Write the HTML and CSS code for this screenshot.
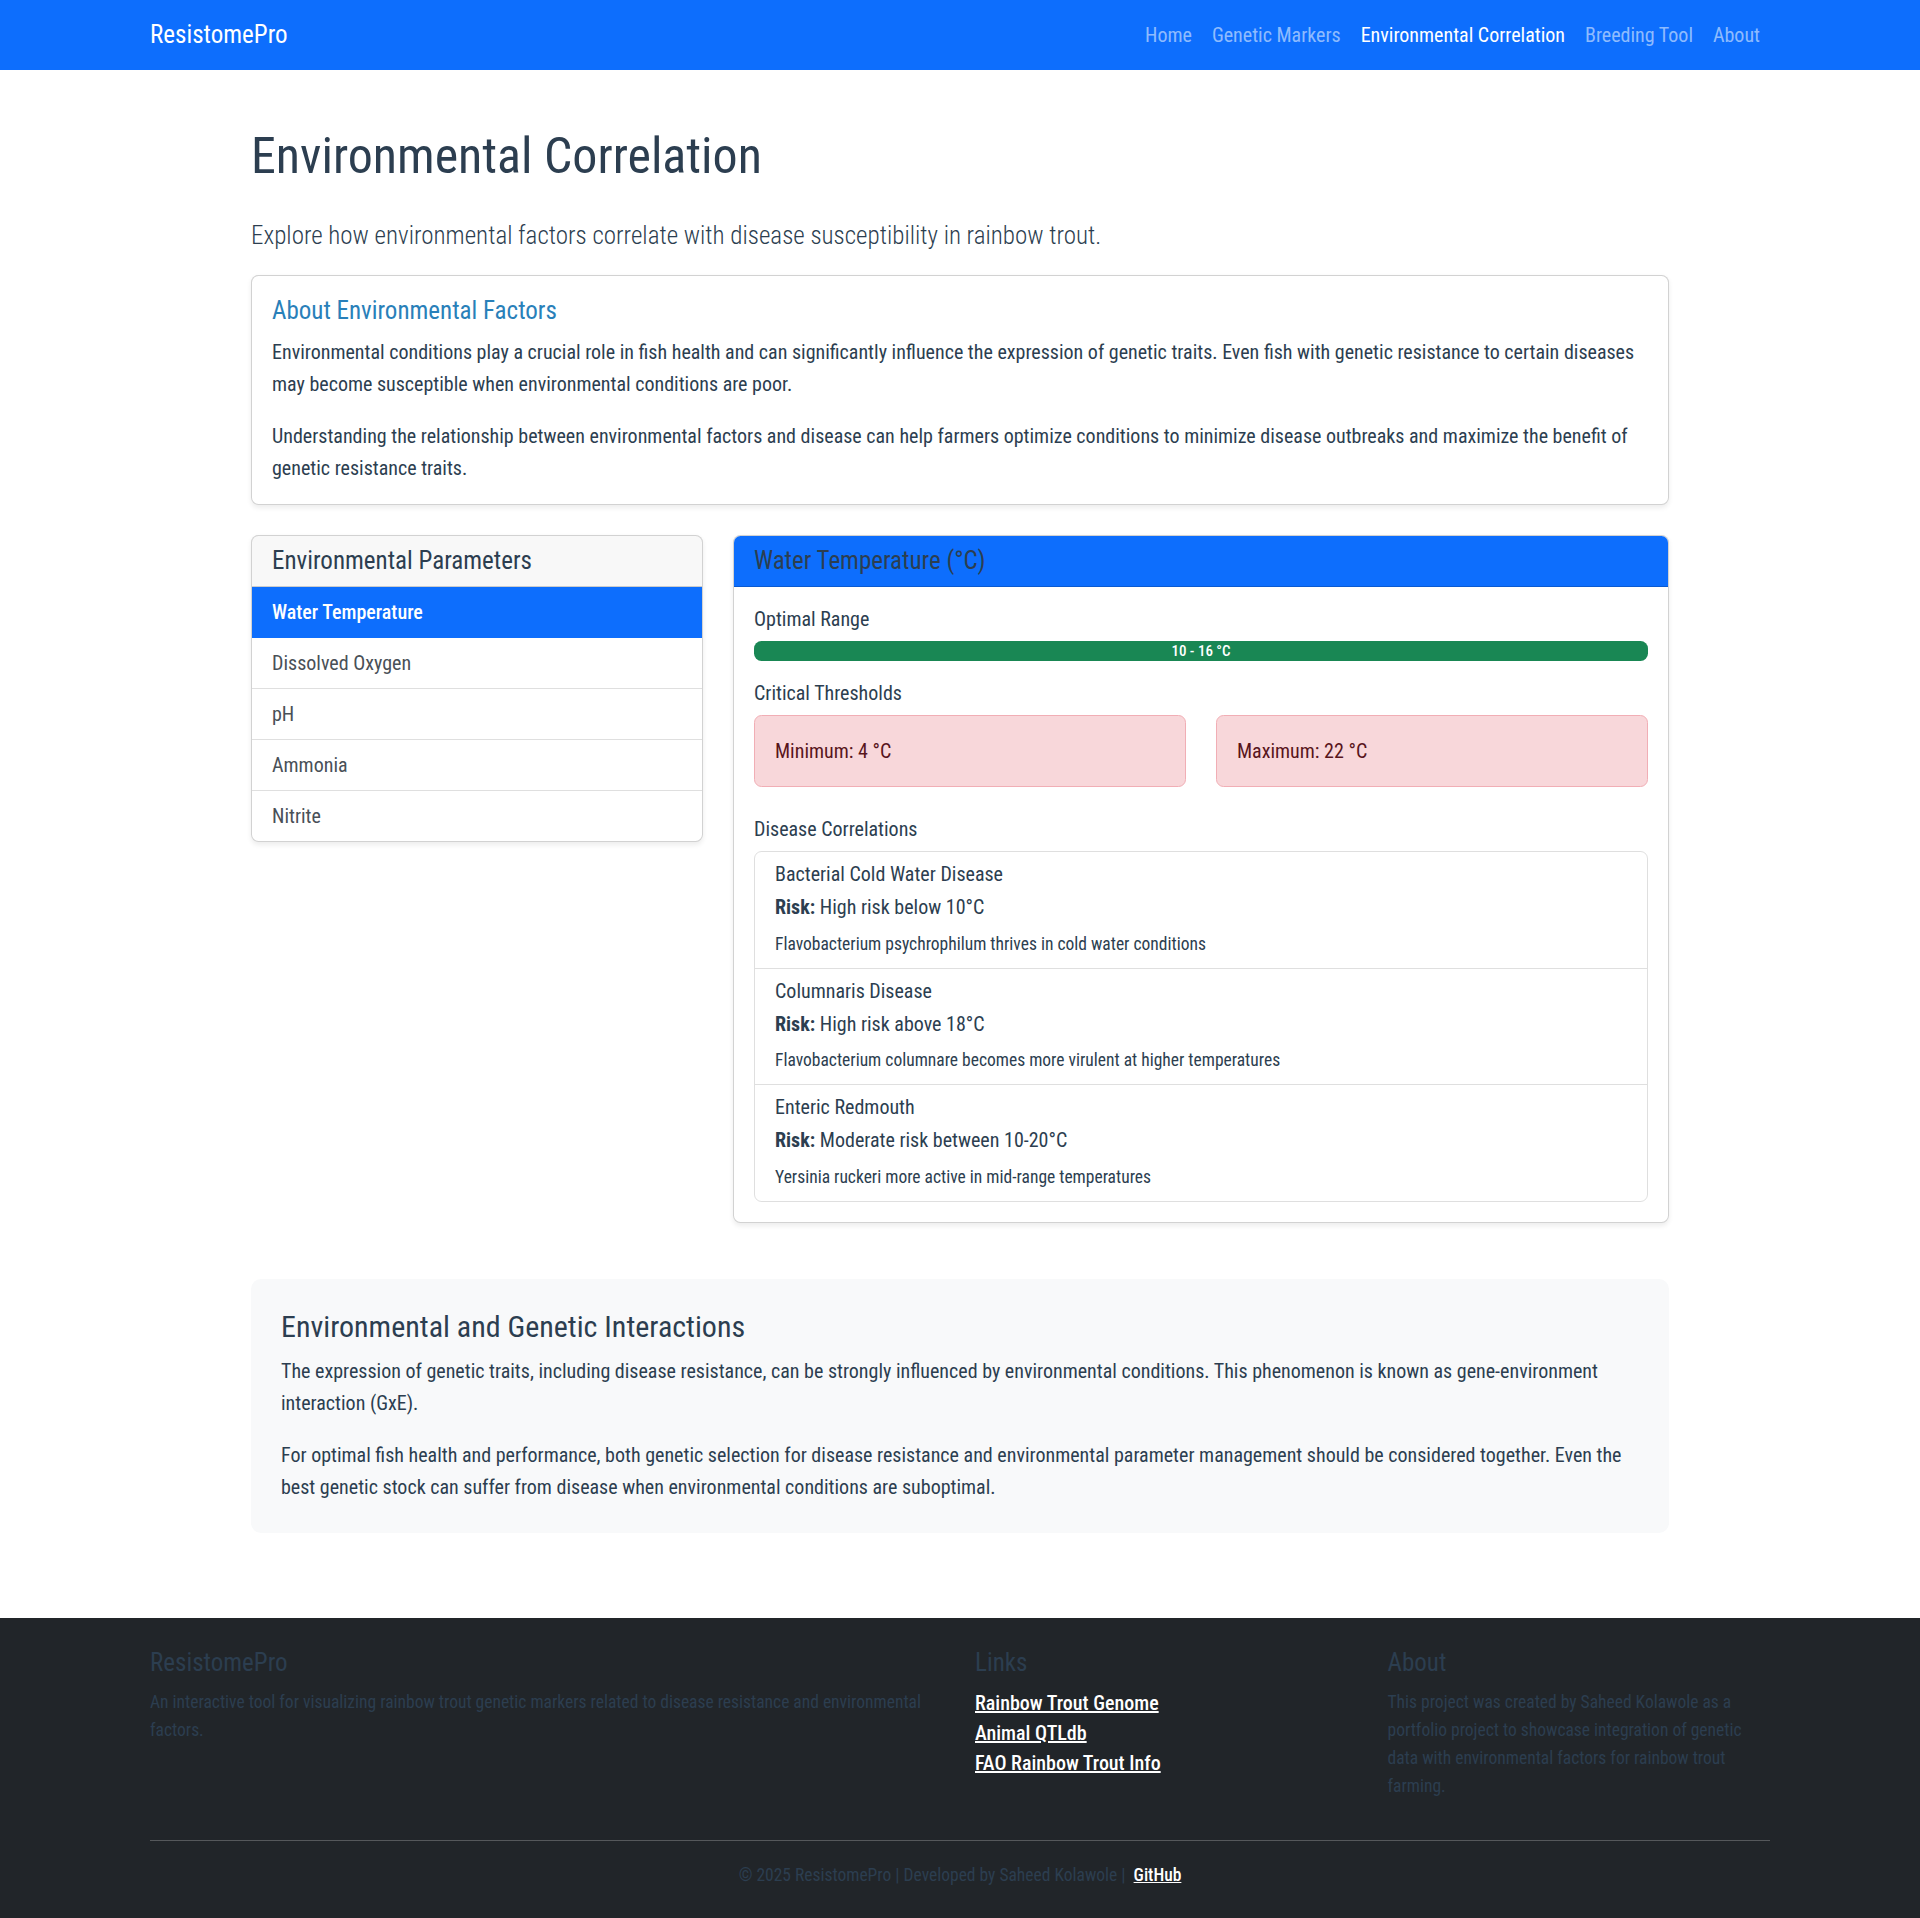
FILE: index.html
```html
<!DOCTYPE html>
<html lang="en">
<head>
<meta charset="utf-8">
<title>Environmental Correlation - ResistomePro</title>
<link rel="stylesheet" href="styles.css">
</head>
<body>
<nav class="navbar">
  <div class="nav-inner">
    <a class="brand" href="#">ResistomePro</a>
    <ul class="nav-links">
      <li><a href="#">Home</a></li>
      <li><a href="#">Genetic Markers</a></li>
      <li><a class="active" href="#">Environmental Correlation</a></li>
      <li><a href="#">Breeding Tool</a></li>
      <li><a href="#">About</a></li>
    </ul>
  </div>
</nav>

<main class="main">
  <h1 class="page-title">Environmental Correlation</h1>
  <p class="lead">Explore how environmental factors correlate with disease susceptibility in rainbow trout.</p>

  <section class="card about-card">
    <div class="card-body">
      <h5 class="about-title">About Environmental Factors</h5>
      <p>Environmental conditions play a crucial role in fish health and can significantly influence the expression of genetic traits. Even fish with genetic resistance to certain diseases may become susceptible when environmental conditions are poor.</p>
      <p class="last">Understanding the relationship between environmental factors and disease can help farmers optimize conditions to minimize disease outbreaks and maximize the benefit of genetic resistance traits.</p>
    </div>
  </section>

  <div class="param-row">
    <div class="card param-card">
      <div class="card-header"><h5>Environmental Parameters</h5></div>
      <ul class="param-list">
        <li class="active">Water Temperature</li>
        <li>Dissolved Oxygen</li>
        <li>pH</li>
        <li>Ammonia</li>
        <li>Nitrite</li>
      </ul>
    </div>

    <div class="card detail-card">
      <div class="card-header primary"><h5>Water Temperature (°C)</h5></div>
      <div class="card-body">
        <h6>Optimal Range</h6>
        <div class="progress"><div class="progress-bar" style="width: 100%">10 - 16 °C</div></div>

        <h6>Critical Thresholds</h6>
        <div class="thresholds">
          <div class="alert">Minimum: 4 °C</div>
          <div class="alert">Maximum: 22 °C</div>
        </div>

        <h6>Disease Correlations</h6>
        <ul class="disease-list">
          <li>
            <h6 class="disease-name">Bacterial Cold Water Disease</h6>
            <p class="risk"><strong>Risk:</strong> High risk below 10°C</p>
            <p class="desc">Flavobacterium psychrophilum thrives in cold water conditions</p>
          </li>
          <li>
            <h6 class="disease-name">Columnaris Disease</h6>
            <p class="risk"><strong>Risk:</strong> High risk above 18°C</p>
            <p class="desc">Flavobacterium columnare becomes more virulent at higher temperatures</p>
          </li>
          <li>
            <h6 class="disease-name">Enteric Redmouth</h6>
            <p class="risk"><strong>Risk:</strong> Moderate risk between 10-20°C</p>
            <p class="desc">Yersinia ruckeri more active in mid-range temperatures</p>
          </li>
        </ul>
      </div>
    </div>
  </div>

  <section class="gxe">
    <h4>Environmental and Genetic Interactions</h4>
    <p>The expression of genetic traits, including disease resistance, can be strongly influenced by environmental conditions. This phenomenon is known as gene-environment interaction (GxE).</p>
    <p class="last">For optimal fish health and performance, both genetic selection for disease resistance and environmental parameter management should be considered together. Even the best genetic stock can suffer from disease when environmental conditions are suboptimal.</p>
  </section>
</main>

<footer class="footer">
  <div class="footer-inner">
    <div class="footer-row">
      <div class="footer-col">
        <h5>ResistomePro</h5>
        <p class="small">An interactive tool for visualizing rainbow trout genetic markers related to disease resistance and environmental factors.</p>
      </div>
      <div class="footer-col">
        <h5>Links</h5>
        <ul class="footer-links">
          <li><a href="#">Rainbow Trout Genome</a></li>
          <li><a href="#">Animal QTLdb</a></li>
          <li><a href="#">FAO Rainbow Trout Info</a></li>
        </ul>
      </div>
      <div class="footer-col">
        <h5>About</h5>
        <p class="small">This project was created by Saheed Kolawole as a portfolio project to showcase integration of genetic data with environmental factors for rainbow trout farming.</p>
      </div>
    </div>
    <hr class="footer-rule">
    <p class="copyright">© 2025 ResistomePro | Developed by Saheed Kolawole | &nbsp;<a href="#">GitHub</a></p>
  </div>
</footer>
</body>
</html>
```

FILE: styles.css
```css
html {
  font-size: 20px;
}

body {
  margin: 0;
  font-family: "Roboto Condensed", Roboto, "Liberation Sans", sans-serif;
  font-size: 20px;
  line-height: 1.5;
  color: #2c3e50;
  background: #fff;
}

h1, h4, h5, h6 {
  margin: 0 0 10px;
  font-weight: 400;
  line-height: 1.2;
  color: #2c3e50;
}

h5 { font-size: 25px; }
h6 { font-size: 20px; }

p {
  margin: 0 0 20px;
  line-height: 1.6;
}

p.last { margin-bottom: 0; }

/* Navbar */
.navbar {
  background: #0d6efd;
  padding: 10px 0;
}

.nav-inner {
  width: 1620px;
  margin: 0 auto;
  display: flex;
  align-items: center;
  justify-content: space-between;
}

.brand {
  font-size: 25px;
  line-height: 37.5px;
  padding: 6.25px 0;
  color: #fff;
  text-decoration: none;
}

.nav-links {
  list-style: none;
  margin: 0;
  padding: 0;
  display: flex;
}

.nav-links a {
  display: block;
  padding: 10px;
  line-height: 30px;
  color: rgba(255, 255, 255, 0.55);
  text-decoration: none;
}

.nav-links a.active { color: #fff; }

/* Main */
.main {
  width: 1418px;
  margin: 56px auto 0;
}

.page-title {
  font-size: 50px;
  margin-bottom: 30px;
}

.lead {
  font-size: 25px;
  font-weight: 300;
  line-height: 40px;
  margin-bottom: 19px;
}

.card {
  background: #fff;
  border: 1px solid rgba(0, 0, 0, 0.175);
  border-radius: 7.5px;
  box-shadow: 0 2.5px 5px rgba(0, 0, 0, 0.075);
  overflow: hidden;
}

.card-body { padding: 20px; }

.about-card { margin-bottom: 30px; }

.about-title {
  color: #2980b9;
  margin-bottom: 10px;
}

.param-row {
  display: grid;
  grid-template-columns: 452px 1fr;
  gap: 30px;
  align-items: start;
  margin-bottom: 56px;
}

.card-header {
  padding: 10px 20px;
  background: rgba(33, 37, 41, 0.03);
  border-bottom: 1px solid rgba(0, 0, 0, 0.175);
}

.card-header h5 {
  margin: 0;
  line-height: 30px;
}

.card-header.primary { background: #0d6efd; }

.param-list {
  list-style: none;
  margin: 0;
  padding: 0;
}

.param-list li {
  padding: 10px 20px;
  line-height: 30px;
  color: #495057;
  border-bottom: 1px solid rgba(0, 0, 0, 0.125);
}

.param-list li:last-child { border-bottom: 0; }

.param-list li.active {
  background: #0d6efd;
  color: #fff;
  font-weight: 500;
  border-bottom-color: #0d6efd;
}

.progress {
  display: flex;
  height: 20px;
  background: #e9ecef;
  border-radius: 7.5px;
  overflow: hidden;
  margin-bottom: 20px;
}

.progress-bar {
  display: flex;
  align-items: center;
  justify-content: center;
  background: #198754;
  color: #fff;
  font-size: 15px;
  font-weight: 500;
  white-space: nowrap;
}

.thresholds {
  display: grid;
  grid-template-columns: 1fr 1fr;
  gap: 30px;
  margin-bottom: 30px;
}

.alert {
  padding: 20px;
  line-height: 30px;
  background: #f8d7da;
  border: 1px solid #f1aeb5;
  color: #58151c;
  border-radius: 7.5px;
}

.disease-list {
  list-style: none;
  margin: 0;
  padding: 0;
  border: 1px solid rgba(0, 0, 0, 0.125);
  border-radius: 7.5px;
}

.disease-list li {
  padding: 10px 20px;
  border-bottom: 1px solid rgba(0, 0, 0, 0.125);
}

.disease-list li:last-child { border-bottom: 0; }

.disease-name {
  line-height: 24px;
  margin-bottom: 5px;
}

.risk {
  line-height: 32px;
  margin-bottom: 6.5px;
}

.risk strong { font-weight: 700; }

.desc {
  font-size: 17.5px;
  line-height: 28px;
  margin: 0;
}

.gxe {
  background: #f8f9fa;
  border-radius: 10px;
  padding: 30px;
  margin-bottom: 85px;
}

.gxe h4 {
  font-size: 30px;
  line-height: 36px;
  margin-bottom: 10px;
}

/* Footer */
.footer {
  background: #212529;
  padding: 30px 0;
}

.footer-inner {
  width: 1620px;
  margin: 0 auto;
}

.footer-row {
  display: grid;
  grid-template-columns: 795px 382.5px 382.5px;
  column-gap: 30px;
}

.footer h5 {
  line-height: 30px;
}

.small {
  font-size: 17.5px;
  line-height: 28px;
}

.footer-links {
  list-style: none;
  margin: 0;
  padding: 0;
}

.footer-links li { line-height: 30px; }

.footer a {
  color: #fff;
  font-weight: 500;
  text-decoration: underline;
}

.footer-rule {
  margin: 20px 0;
  border: 0;
  border-top: 1px solid #55585b;
  height: 0;
}

.copyright {
  text-align: center;
  font-size: 17.5px;
  line-height: 28px;
  margin: 0;
}
```
